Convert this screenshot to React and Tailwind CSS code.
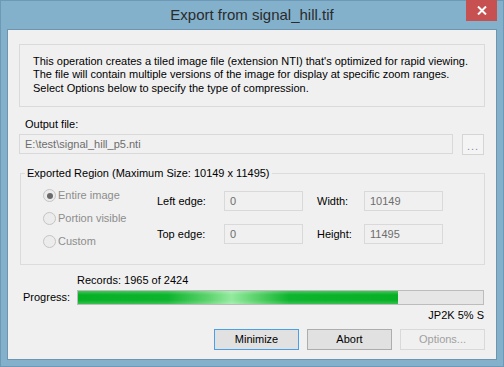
const labelCls = "text-[11px] leading-[13px] text-black"

function Field({ value, className = "" }) {
  return (
    <div className={"h-[20px] border border-[#d9d9d9] bg-[#f0f0f0] flex items-center pl-[5px] text-[11px] text-[#6d6d6d] " + className}>
      {value}
    </div>
  )
}

function Radio({ label, checked }) {
  return (
    <div className="h-[23px] flex items-center gap-[2px]">
      <span className="w-[13px] h-[13px] rounded-full border border-[#c4c4c4] bg-[#ececec] flex items-center justify-center">
        {checked && <span className="w-[6px] h-[6px] rounded-full bg-[#6a6a6a]" />}
      </span>
      <span className="text-[11px] text-[#8d8d8d]">{label}</span>
    </div>
  )
}

function Button({ children, variant = "normal" }) {
  const styles = {
    focus: "border-[#4a9fe6] bg-[#e1e1e1] text-black",
    normal: "border-[#adadad] bg-[#e1e1e1] text-black",
    disabled: "border-[#d9d9d9] bg-[#f0f0f0] text-[#a0a0a0]",
  }
  return (
    <button className={"w-[85px] h-[21px] border text-[11px] flex items-center justify-center " + styles[variant]}>
      {children}
    </button>
  )
}

export default function App() {
  return (
    <div className="w-[504px] h-[367px] bg-[#83b0cb] border border-[#6d98b6] flex flex-col relative font-['Liberation_Sans',Arial,sans-serif]">
      <div className="h-[28px] flex items-center justify-center">
        <span className="text-[15px] text-[#2b2b2b]">Export from signal_hill.tif</span>
      </div>
      <div className="absolute top-[-1px] right-[6px] w-[31px] h-[21px] bg-[#c75050] flex items-center justify-center">
        <svg width="10" height="9" viewBox="0 0 10 9">
          <path d="M1 0.5 L9 8.5 M9 0.5 L1 8.5" stroke="white" strokeWidth="2" />
        </svg>
      </div>

      <div className="mx-[6px] h-[331px] border border-[#6f94b0] bg-[#f0f0f0] px-[11px] flex flex-col">
        {/* description */}
        <div className="mt-[14px] h-[63px] border border-[#dadada] pl-[13px] pt-[10px] text-[11px] leading-[13.3px] text-black">
          <p>This operation creates a tiled image file (extension NTI) that's optimized for rapid viewing.</p>
          <p>The file will contain multiple versions of the image for display at specific zoom ranges.</p>
          <p>Select Options below to specify the type of compression.</p>
        </div>

        {/* output file */}
        <div className={labelCls + " mt-[11px] ml-[6px]"}>Output file:</div>
        <div className="mt-[3px] flex items-start">
          <Field value="E:\test\signal_hill_p5.nti" className="w-[434px]" />
          <div className="ml-[9px] w-[22px] h-[21px] border border-[#d5d5d5] bg-[#f4f4f4] flex items-center justify-center pt-[3px] text-[11px] text-[#8a8aa0] tracking-[1px]">
            ...
          </div>
        </div>

        {/* exported region */}
        <fieldset className="mt-[12px] ml-[1px] w-[465px] h-[98px] border border-[#dcdcdc] box-border">
          <legend className="ml-[4px] px-[2px] text-[11px] leading-[13px] text-black">
            Exported Region (Maximum Size: 10149 x 11495)
          </legend>
          <div className="flex items-start mt-[4px] pl-[22px]">
            <div className="w-[114px] flex flex-col">
              <Radio label="Entire image" checked />
              <Radio label="Portion visible" />
              <Radio label="Custom" />
            </div>
            <div className="mt-[7px] grid grid-cols-[67px_79px_61px_79px] gap-y-[13px] items-center">
              <span className="text-[11px] text-black">Left edge:</span>
              <Field value="0" />
              <span className="text-[11px] text-black pl-[14px]">Width:</span>
              <Field value="10149" />
              <span className="text-[11px] text-black">Top edge:</span>
              <Field value="0" />
              <span className="text-[11px] text-black pl-[14px]">Height:</span>
              <Field value="11495" />
            </div>
          </div>
        </fieldset>

        {/* progress */}
        <div className={labelCls + " mt-[9px] ml-[58px]"}>Records: 1965 of 2424</div>
        <div className="mt-[2px] flex items-center">
          <span className="w-[58px] pl-[4px] text-[11px] text-black">Progress:</span>
          <div className="w-[407px] h-[15px] border border-[#bcbcbc] bg-[#e6e6e6] flex">
            <div className="w-[320px] h-full bg-[linear-gradient(90deg,#06b025_0%,#0db42d_28%,#5fd46f_41%,#93ea9f_48%,#5fd46f_55%,#0db42d_66%,#06b025_100%)] relative">
              <div className="absolute inset-0 bg-[linear-gradient(180deg,rgba(255,255,255,0.25)_0%,rgba(255,255,255,0)_30%,rgba(255,255,255,0)_70%,rgba(255,255,255,0.2)_100%)]" />
            </div>
          </div>
        </div>
        <div className={labelCls + " mt-[3px] self-end pr-[1px]"}>JP2K 5% S</div>

        {/* buttons */}
        <div className="mt-[7px] flex justify-end gap-[8px]">
          <Button variant="focus">Minimize</Button>
          <Button>Abort</Button>
          <Button variant="disabled">Options...</Button>
        </div>
      </div>
    </div>
  )
}
